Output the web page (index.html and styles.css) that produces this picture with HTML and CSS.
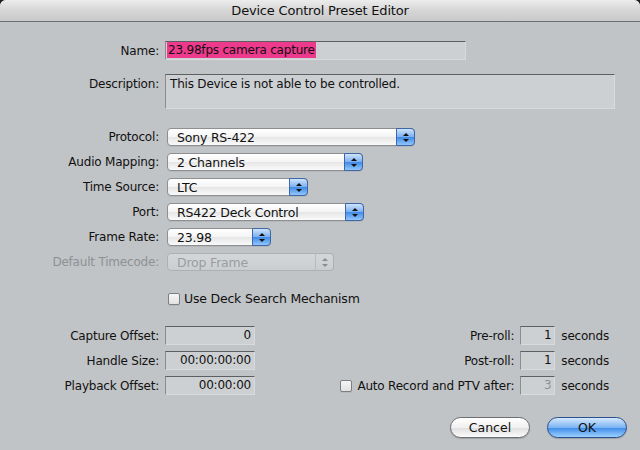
FILE: index.html
```html
<!doctype html>
<html lang="en">

<head>
    <meta charset="utf-8" />
    <title>Device Control Preset Editor</title>
    <link rel="stylesheet" href="styles.css">
</head>

<body>
    <div class="window">
        <div class="title-bar">Device Control Preset Editor</div>

        <div class="content">
            <div class="form-top">
                <label class="lbl">Name:</label>
                <div class="field name-field"><span class="sel">23.98fps camera capture</span></div>

                <label class="lbl lbl-top">Description:</label>
                <div class="field desc-field">This Device is not able to be controlled.</div>
            </div>

            <div class="form-popups">
                <label class="lbl">Protocol:</label>
                <div class="popup w-protocol"><span>Sony RS-422</span><i class="cap"></i></div>

                <label class="lbl">Audio Mapping:</label>
                <div class="popup w-audio"><span>2 Channels</span><i class="cap"></i></div>

                <label class="lbl">Time Source:</label>
                <div class="popup w-time"><span>LTC</span><i class="cap"></i></div>

                <label class="lbl">Port:</label>
                <div class="popup w-port"><span>RS422 Deck Control</span><i class="cap"></i></div>

                <label class="lbl">Frame Rate:</label>
                <div class="popup w-rate"><span>23.98</span><i class="cap"></i></div>

                <label class="lbl dim">Default Timecode:</label>
                <div class="popup w-tc disabled"><span>Drop Frame</span><i class="cap"></i></div>
            </div>

            <div class="check-row">
                <span class="box"></span>Use Deck Search Mechanism
            </div>

            <div class="form-bottom">
                <div class="offsets">
                    <label class="lbl">Capture Offset:</label>
                    <div class="field num">0</div>
                    <label class="lbl">Handle Size:</label>
                    <div class="field num">00:00:00:00</div>
                    <label class="lbl">Playback Offset:</label>
                    <div class="field num">00:00:00</div>
                </div>

                <div class="rolls">
                    <label class="lbl">Pre-roll:</label>
                    <div class="field small num">1</div>
                    <span class="unit">seconds</span>

                    <label class="lbl">Post-roll:</label>
                    <div class="field small num">1</div>
                    <span class="unit">seconds</span>

                    <label class="lbl"><span class="box"></span>Auto Record and PTV after:</label>
                    <div class="field small num dim">3</div>
                    <span class="unit">seconds</span>
                </div>
            </div>

            <div class="buttons">
                <button class="btn">Cancel</button>
                <button class="btn btn-default">OK</button>
            </div>
        </div>
    </div>
</body>

</html>
```

FILE: styles.css
```css
html, body {
    margin: 0;
    padding: 0;
    background: #1c1c1c;
}

.window {
    width: 640px;
    height: 450px;
    overflow: hidden;
    background: #c1c4c7;
    border-radius: 6px 6px 0 0;
    font-family: "DejaVu Sans", sans-serif;
    font-size: 12px;
    letter-spacing: -0.2px;
    color: #111;
}

.title-bar {
    height: 21px;
    line-height: 22px;
    text-align: center;
    font-size: 13px;
    color: #111;
    background: linear-gradient(#ececec, #d6d6d6 50%, #c9c9c9);
    border-bottom: 1px solid #6e6e6e;
}

.content {
    padding-top: 19px;
}

/* Grid rows: labels right aligned to x=158 */
.form-top,
.form-popups,
.offsets {
    display: grid;
    grid-template-columns: 159px auto;
    column-gap: 6px;
    align-items: center;
    justify-items: start;
}

.lbl {
    justify-self: end;
    white-space: nowrap;
}

.lbl-top {
    align-self: start;
    padding-top: 3px;
}

.dim {
    color: #8e9194;
}

/* Text fields */
.field {
    box-sizing: border-box;
    height: 19px;
    line-height: 17px;
    padding: 0 2px;
    background: #cdd0d3;
    border: 1px solid #8a8c8e;
    border-top-color: #5d5f61;
    border-bottom-color: #d8dadc;
    border-right-color: #d8dadc;
    white-space: nowrap;
}

.name-field {
    width: 301px;
    padding-left: 1px;
}

.sel {
    background: #ee3a8c;
    padding: 0 1px;
    display: inline-block;
    line-height: 16px;
}

.form-top {
    row-gap: 14px;
}

.desc-field {
    width: 450px;
    height: 35px;
    padding: 1px 4px;
}

/* Popup buttons */
.form-popups {
    margin-top: 19px;
    row-gap: 7px;
}

.popup {
    box-sizing: border-box;
    position: relative;
    height: 18px;
    margin-left: 2px;
    padding-left: 9px;
    line-height: 17px;
    font-size: 12.5px;
    border: 1px solid #8d8f91;
    border-radius: 4px;
    background: linear-gradient(#ffffff, #f4f4f4 50%, #e6e6e6 51%, #fafafa);
    box-shadow: 0 1px 0 #b5b8bb;
}

.popup .cap {
    position: absolute;
    top: -1px;
    right: -1px;
    bottom: -1px;
    width: 17px;
    border: 1px solid #3d67a8;
    border-radius: 0 4px 4px 0;
    background: linear-gradient(#cfe3fb, #79aff0 50%, #3f8ae6 51%, #93c6fb);
}

.popup .cap::before,
.popup .cap::after {
    content: "";
    position: absolute;
    left: 6px;
    border-left: 3px solid transparent;
    border-right: 3px solid transparent;
}

.popup .cap::before {
    top: 4px;
    border-bottom: 3px solid #111;
}

.popup .cap::after {
    top: 10px;
    border-top: 3px solid #111;
}

.popup.disabled {
    color: #9a9da0;
    border-color: #aeb1b4;
    background: linear-gradient(#d4d7da, #cbced1);
    box-shadow: none;
}

.popup.disabled .cap {
    border-color: #aeb1b4;
    border-left-color: #b9bcbf;
    background: linear-gradient(#d4d7da, #cbced1);
}

.popup.disabled .cap::before {
    border-bottom-color: #8a8d90;
}

.popup.disabled .cap::after {
    border-top-color: #8a8d90;
}

.w-protocol { width: 248px; }
.w-audio { width: 196px; }
.w-time { width: 141px; }
.w-port { width: 197px; }
.w-rate { width: 104px; }
.w-tc { width: 167px; }

/* Checkboxes */
.box {
    display: inline-block;
    box-sizing: border-box;
    width: 12px;
    height: 12px;
    margin-right: 4px;
    vertical-align: -2px;
    border: 1px solid #7c7e80;
    border-radius: 2px;
    background: linear-gradient(#f6f6f6, #e2e2e2);
    box-shadow: 0 1px 0 #b5b8bb;
}

.check-row {
    margin: 20px 0 0 168px;
    font-size: 12.5px;
}

/* Bottom block */
.form-bottom {
    display: flex;
    justify-content: space-between;
    margin-top: 20px;
}

.offsets {
    row-gap: 6px;
}

.offsets .field {
    width: 90px;
}

.num {
    text-align: right;
    padding-right: 3px;
}

.rolls {
    display: grid;
    grid-template-columns: auto 35px auto;
    column-gap: 6px;
    row-gap: 6px;
    align-items: center;
    margin-right: 31px;
}

.rolls .field {
    width: 35px;
}

.rolls .lbl .box {
    margin-right: 5px;
}

/* Buttons */
.buttons {
    display: flex;
    justify-content: flex-end;
    gap: 17px;
    margin: 22px 13px 0 0;
}

.btn {
    box-sizing: border-box;
    width: 80px;
    height: 21px;
    padding: 0;
    font-family: "DejaVu Sans", sans-serif;
    font-size: 12.5px;
    color: #111;
    border: 1px solid #6c6e70;
    border-radius: 11px;
    background: linear-gradient(#ffffff, #f0f0f0 50%, #dedede 51%, #fbfbfb);
    box-shadow: 0 1px 1px #9ea1a4;
}

.btn-default {
    border-color: #2a4f8c;
    background: linear-gradient(#d5e8fd, #7cb4f3 50%, #3d8ae8 51%, #9cd0ff);
}
```
